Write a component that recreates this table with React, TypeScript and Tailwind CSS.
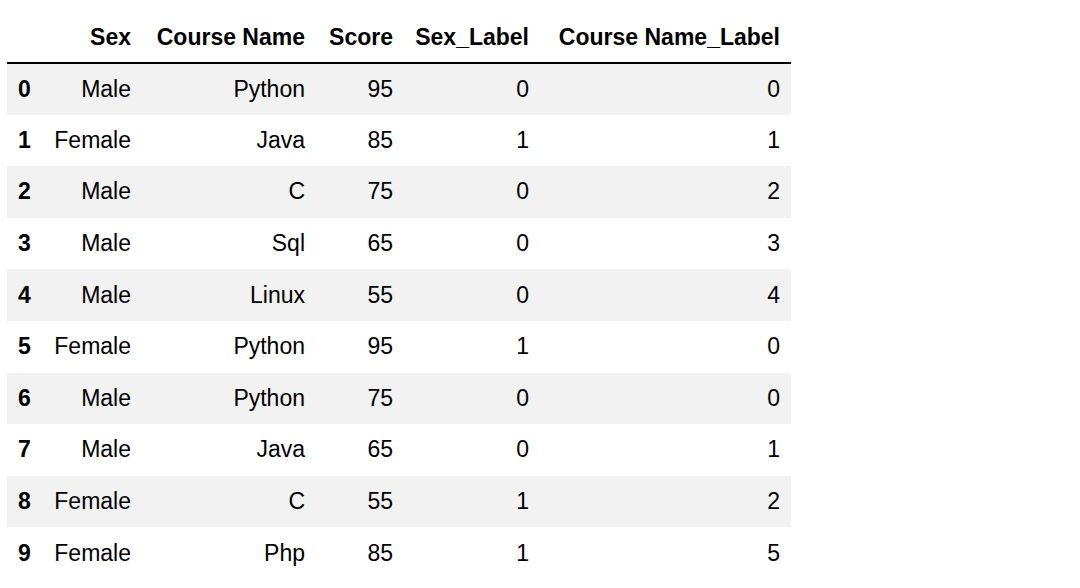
import React from "react";

const rows = [
  ["0", "Male", "Python", "95", "0", "0"],
  ["1", "Female", "Java", "85", "1", "1"],
  ["2", "Male", "C", "75", "0", "2"],
  ["3", "Male", "Sql", "65", "0", "3"],
  ["4", "Male", "Linux", "55", "0", "4"],
  ["5", "Female", "Python", "95", "1", "0"],
  ["6", "Male", "Python", "75", "0", "0"],
  ["7", "Male", "Java", "65", "0", "1"],
  ["8", "Female", "C", "55", "1", "2"],
  ["9", "Female", "Php", "85", "1", "5"],
];

const headers = ["Sex", "Course Name", "Score", "Sex_Label", "Course Name_Label"];

export default function App() {
  return (
    <div
      className="w-[1080px] h-[588px] bg-white overflow-hidden text-black"
      style={{ fontFamily: '"Liberation Sans", Arial, sans-serif' }}
    >
      <table className="table-fixed border-collapse ml-[7px] mt-[12px] w-[784px] text-[23px] leading-none">
        <colgroup>
          <col className="w-[35px]" />
          <col className="w-[100px]" />
          <col className="w-[174px]" />
          <col className="w-[88px]" />
          <col className="w-[136px]" />
          <col className="w-[251px]" />
        </colgroup>
        <thead>
          <tr className="h-[51px] border-b-2 border-black">
            <th className="p-0"></th>
            {headers.map((h) => (
              <th key={h} className="p-0 pr-[11px] text-right font-bold whitespace-nowrap">
                {h}
              </th>
            ))}
          </tr>
        </thead>
        <tbody>
          {rows.map((r, i) => (
            <tr key={i} className={`h-[51.6px] ${i % 2 === 0 ? "bg-[#f2f2f2]" : "bg-white"}`}>
              <th className="p-0 pl-[11px] text-left font-bold">{r[0]}</th>
              {r.slice(1).map((c, j) => (
                <td key={j} className="p-0 pr-[11px] text-right whitespace-nowrap">
                  {c}
                </td>
              ))}
            </tr>
          ))}
        </tbody>
      </table>
    </div>
  );
}
